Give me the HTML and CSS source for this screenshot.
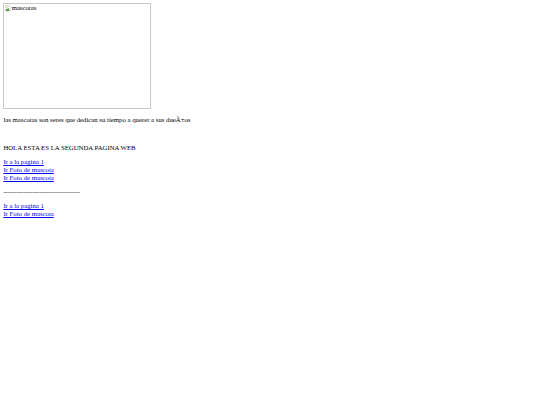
FILE: index.html
```html
<!DOCTYPE html>
<html>
<head>
<meta charset="utf-8">
<link rel="stylesheet" href="styles.css">
</head>
<body class="page">
<div class="pic">
  <svg class="broken" viewBox="0 0 16 16">
    <path d="M1.5 1.5h9l3 3v4" fill="#fff" stroke="#9a9a9a"/>
    <path d="M1.5 1.5v13h6" fill="none" stroke="#9a9a9a"/>
    <rect x="2" y="2" width="8" height="12" fill="#eef4ee"/>
    <path d="M2 12l3-4 2 2 2-3 1 1v6H2z" fill="#4a9a3a"/>
    <circle cx="5" cy="5" r="1.3" fill="#e0c040"/>
    <path d="M9 15.5l2-3 2 2 2-3" fill="none" stroke="#9a9a9a"/>
  </svg><span class="alt">mascotas</span>
</div>
<p class="txt">las mascotas son seres que dedican su tiempo a querer a sus dueÃ±os</p>
<br>
<p class="txt">HOLA ESTA ES LA SEGUNDA PAGINA WEB</p>
<p class="links">
  <a href="#" class="lnk">Ir a la pagina 1</a><br>
  <a href="#" class="lnk">Ir Foto de mascota</a><br>
  <a href="#" class="lnk">Ir Foto de mascota</a>
</p>
<p class="txt">----------------------------------</p>
<p class="links">
  <a href="#" class="lnk">Ir a la pagina 1</a><br>
  <a href="#" class="lnk">Ir Foto de mascota</a>
</p>
</body>
</html>
```
FILE: styles.css
```css
html {
  background: #fff;
}
.page {
  margin: 3.375px;
  font-family: "Liberation Serif", "Times New Roman", serif;
  font-size: 6.75px;
  line-height: 7.55px;
  color: #000;
}
.pic {
  box-sizing: border-box;
  width: 147.66px;
  height: 105.47px;
  border: 0.5px solid #c8c8c8;
  display: flex;
  align-items: flex-start;
  padding: 0.5px;
}
.broken {
  display: block;
  flex: none;
  width: 6.75px;
  height: 6.75px;
}
.alt {
  line-height: 6.75px;
}
.txt {
  margin: 6.75px 0;
}
.links {
  margin: 6.75px 0;
}
.lnk {
  color: #0000ee;
  text-decoration: underline;
}
```
